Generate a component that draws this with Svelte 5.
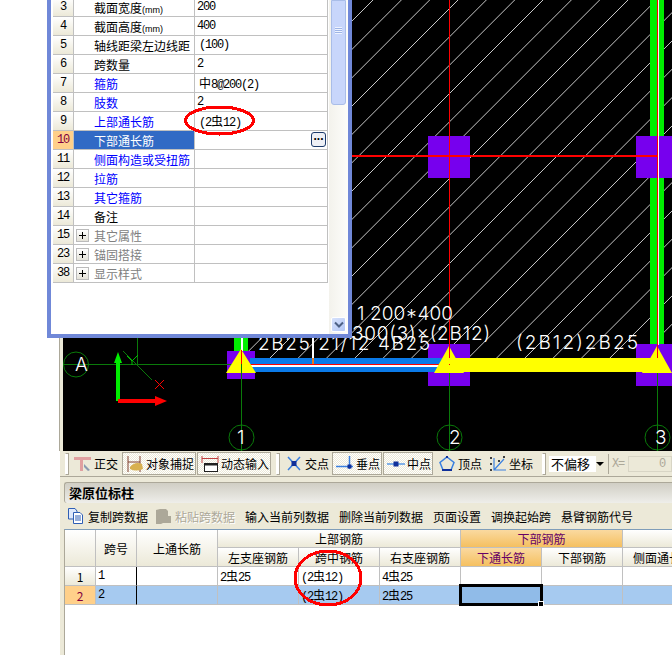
<script>
	const props = [
		{ n: 3, name: '截面宽度', unit: '(mm)', value: '200' },
		{ n: 4, name: '截面高度', unit: '(mm)', value: '400' },
		{ n: 5, name: '轴线距梁左边线距', value: '(100)', pad: true },
		{ n: 6, name: '跨数量', value: '2' },
		{ n: 7, name: '箍筋', kind: 'link', pad: true, before: '', sym: '中', value: '8@200(2)' },
		{ n: 8, name: '肢数', kind: 'link', value: '2' },
		{ n: 9, name: '上部通长筋', kind: 'link', pad: true, before: '(2', sym: '虫', value: '12)' },
		{ n: 10, name: '下部通长筋', kind: 'active', value: '' },
		{ n: 11, name: '侧面构造或受扭筋', kind: 'link', value: '' },
		{ n: 12, name: '拉筋', kind: 'link', value: '' },
		{ n: 13, name: '其它箍筋', kind: 'link', value: '' },
		{ n: 14, name: '备注', value: '' },
		{ n: 15, name: '其它属性', kind: 'group', value: '' },
		{ n: 23, name: '锚固搭接', kind: 'group', value: '' },
		{ n: 38, name: '显示样式', kind: 'group', value: '' }
	];

	const actions = ['输入当前列数据', '删除当前列数据', '页面设置', '调换起始跨', '悬臂钢筋代号'];

	// 45 degree slab hatch, x + y = c
	const hatch = Array.from({ length: 30 }, (_, i) => 259.7 + i * 28.33);
</script>

<div class="page">
	<div class="work">
		<svg class="canvas" width="609" height="451" viewBox="63 0 609 451">
			<defs>
				<clipPath id="slab"><rect x="248" y="0" width="424" height="358" /></clipPath>
			</defs>
			<g clip-path="url(#slab)" class="hatch">
				{#each hatch as c}
					<line x1={c} y1="0" x2={c - 358} y2="358" />
				{/each}
			</g>

			<!-- columns and walls -->
			<rect x="234" y="300" width="14" height="52" fill="#00ee00" />
			<rect x="241" y="300" width="2" height="52" fill="#ffffff" />
			<rect x="650" y="0" width="14" height="345" fill="#00ee00" />
			<rect x="428" y="136" width="42" height="42" fill="#7700ee" />
			<rect x="636" y="136" width="36" height="42" fill="#7700ee" />
			<rect x="227" y="351" width="28" height="28" fill="#7700ee" />
			<rect x="428" y="344" width="42" height="42" fill="#7700ee" />
			<rect x="636" y="344" width="36" height="42" fill="#7700ee" />

			<!-- red reference lines -->
			<rect x="352" y="155" width="305" height="2" fill="#ff0000" />
			<rect x="449" y="0" width="1" height="358" fill="#ff0000" />
			<rect x="657" y="0" width="1" height="358" fill="#ff0000" />
			<rect x="658" y="0" width="1" height="345" fill="#ffffff" />

			<!-- beams -->
			<rect x="250" y="358" width="200" height="14" fill="#0a7ae8" />
			<rect x="250" y="365" width="200" height="2" fill="#ffffff" />
			<rect x="450" y="358" width="206" height="14" fill="#ffff00" />
			<rect x="241" y="364" width="209" height="1" fill="#ff0000" />
			<rect x="312" y="337" width="2" height="21" fill="#ffffff" />
			<rect x="312" y="358" width="2" height="6" fill="#e87820" />

			<!-- axis grid -->
			<g stroke="#0a7a0a" fill="none">
				<line x1="63" y1="364.5" x2="241" y2="364.5" />
				<line x1="241.5" y1="373" x2="241.5" y2="451" />
				<line x1="449.5" y1="372" x2="449.5" y2="451" />
				<line x1="657.5" y1="372" x2="657.5" y2="451" />
				<line x1="137.5" y1="337" x2="137.5" y2="364" />
				<line x1="123" y1="351" x2="152" y2="380" />
				<circle cx="76" cy="364.5" r="12.5" />
				<circle cx="241.5" cy="437.5" r="12.5" />
				<circle cx="449.5" cy="437.5" r="12.5" />
				<circle cx="657.5" cy="437.5" r="12.5" />
				<path d="M127 356 L132 361 L138 355 M132 361 V365" stroke="#00c000" />
			</g>

			<!-- supports -->
			<path d="M241 349 L256 373 H226 Z" fill="#ffff00" />
			<path d="M449 346 L464 373 H434 Z" fill="#ffff00" />
			<path d="M657 346 L672 373 H642 Z" fill="#ffff00" />
			<rect x="241" y="350" width="1" height="24" fill="#ff0000" />
			<rect x="241" y="364" width="1" height="10" fill="#0a7a0a" />
			<rect x="449" y="346" width="1" height="12" fill="#ff0000" />
			<rect x="657" y="346" width="1" height="12" fill="#ff0000" />
			<rect x="449" y="364" width="1" height="1" fill="#ff0000" />

			<!-- ucs arrows -->
			<rect x="116" y="360" width="4" height="41" fill="#00ee00" />
			<path d="M118 352 L122 363 H114 Z" fill="#00ee00" />
			<rect x="118" y="399" width="40" height="4" fill="#ff0000" />
			<path d="M167 401 L155 396 V406 Z" fill="#ff0000" />
			<path d="M155 380 L164 389 M164 380 L155 389" stroke="#ff0000" fill="none" />

			<!-- plan annotations -->
			<text class="cad" x="357" y="320" textLength="96">1 200*400</text>
			<text class="cad" x="352" y="340" textLength="138">300(3)×(2B12)</text>
			<text class="cad" x="258" y="350" textLength="172">2B25 21/12 4B25</text>
			<text class="cad" x="516" y="349" textLength="122">(2B12)2B25</text>
			<text class="cad" x="75" y="371">A</text>
			<text class="cad" x="237" y="444">1</text>
			<text class="cad" x="449" y="444">2</text>
			<text class="cad" x="655" y="444">3</text>
		</svg>
	</div>

	<div class="bottom">
		<div class="toolbar">
			<span class="grip first"></span>
			<div class="tool">
				<svg width="18" height="18" viewBox="0 0 18 18">
					<path d="M0 2 H17 V5 H9 V16 H6 V5 H0 Z" fill="#e0a0a0" />
					<path d="M10 9 L16 15 L14 16 L10 12 Z" fill="#8a9ab0" />
				</svg>
				<span>正交</span>
			</div>
			<div class="tool on wide">
				<svg width="18" height="18" viewBox="0 0 18 18">
					<path d="M2 1 V17 M14 1 V17 M2 7 H14" stroke="#804030" fill="none" />
					<path d="M4 12 Q9 6 16 9 L17 14 Q10 17 4 14 Z" fill="#d8b050" />
				</svg>
				<span>对象捕捉</span>
			</div>
			<div class="tool on wide">
				<svg width="18" height="18" viewBox="0 0 18 18">
					<path d="M1 1 V8 M17 1 V8 M1 3.500 H17" stroke="#c04040" fill="none" />
					<rect x="3.500" y="8.500" width="13" height="8" fill="#fff" stroke="#202020" />
					<rect x="4" y="9" width="12" height="1.500" fill="#202020" />
				</svg>
				<span>动态输入</span>
			</div>
			<span class="grip"></span>
			<div class="tool">
				<svg width="18" height="18" viewBox="0 0 18 18">
					<path d="M3 2 L15 15 M15 2 L3 15" stroke="#3a80e0" stroke-width="1.500" fill="none" />
					<rect x="6.500" y="6" width="5" height="5" fill="#10309a" />
				</svg>
				<span>交点</span>
			</div>
			<div class="tool on">
				<svg width="18" height="18" viewBox="0 0 18 18">
					<path d="M0 11.500 H17 M13.500 1 V14" stroke="#3a80e0" stroke-width="1.500" fill="none" />
					<rect x="11.500" y="9.500" width="4" height="4" fill="#10309a" />
				</svg>
				<span>垂点</span>
			</div>
			<div class="tool on">
				<svg width="18" height="18" viewBox="0 0 18 18">
					<path d="M0 9 H18" stroke="#80b0e8" stroke-width="2" fill="none" />
					<rect x="6.500" y="6.500" width="5" height="5" fill="#10309a" />
				</svg>
				<span>中点</span>
			</div>
			<div class="tool">
				<svg width="18" height="18" viewBox="0 0 18 18">
					<path d="M9 2 L16 7.500 L13 15 H5 L2 7.500 Z" stroke="#3a80e0" stroke-width="1.500" fill="none" />
					<path d="M4 14 H14 V16 H4 Z M8 1 H10 V3 H8 Z" fill="#10309a" />
				</svg>
				<span>顶点</span>
			</div>
			<div class="tool">
				<svg width="18" height="18" viewBox="0 0 18 18">
					<path d="M5 3 V15 H17 M5 15 L15 4" stroke="#3a80e0" stroke-width="1.200" fill="none" />
					<path d="M1 2 h2 v2 h-2 Z M1 8 h2 v2 h-2 Z M1 14 h2 v2 h-2 Z M14 1 h2 v2 h-2 Z M9 5 h2 v2 h-2 Z" fill="#404040" />
				</svg>
				<span>坐标</span>
			</div>
			<span class="grip narrow"></span>
			<div class="combo">
				<span class="combo-text">不偏移</span>
				<span class="combo-arrow"></span>
			</div>
			<span class="sep"></span>
			<span class="mono coord-label">X=</span>
			<div class="coord mono">0</div>
		</div>

		<div class="title"><b>梁原位标柱</b></div>

		<div class="actions">
			<div class="action">
				<svg width="15" height="16" viewBox="0 0 15 16">
					<path d="M0.500 0.500 H7 L9 3 V11 H0.500 Z" fill="#dfe9fb" stroke="#2f5fb5" />
					<path d="M5.500 4.500 H12 L14.500 7 V15.500 H5.500 Z" fill="#ffffff" stroke="#2f5fb5" />
					<path d="M7 8 H13 M7 10 H13 M7 12 H13" stroke="#2f5fb5" />
				</svg>
				<span>复制跨数据</span>
			</div>
			<div class="action disabled">
				<svg width="17" height="16" viewBox="0 0 17 16">
					<path d="M1 2 L5 1 H11 L13 3 V8 H16 V15 H8 L6 16 H1 Z" fill="#aca899" />
				</svg>
				<span>粘贴跨数据</span>
			</div>
			{#each actions as label}
				<div class="action"><span>{label}</span></div>
			{/each}
		</div>

		<div class="sheet">
			<table class="beam">
				<colgroup>
					<col class="c-idx" /><col class="c-no" /><col class="c-w" /><col class="c-w" /><col class="c-w" /><col class="c-w" /><col class="c-w" /><col class="c-w" /><col class="c-w" />
				</colgroup>
				<thead>
					<tr>
						<th rowspan="2"></th>
						<th rowspan="2">跨号</th>
						<th rowspan="2">上通长筋</th>
						<th colspan="3">上部钢筋</th>
						<th colspan="2" class="hot">下部钢筋</th>
						<th></th>
					</tr>
					<tr>
						<th>左支座钢筋</th>
						<th>跨中钢筋</th>
						<th>右支座钢筋</th>
						<th class="hot">下通长筋</th>
						<th>下部钢筋</th>
						<th>侧面通长筋</th>
					</tr>
				</thead>
				<tbody>
					<tr>
						<td class="idx">1</td>
						<td class="mono strong">1</td>
						<td></td>
						<td class="mono">2<i>虫</i>25</td>
						<td class="mono">(2<i>虫</i>12)</td>
						<td class="mono">4<i>虫</i>25</td>
						<td></td>
						<td></td>
						<td></td>
					</tr>
					<tr class="current">
						<td class="idx">2</td>
						<td class="mono strong">2</td>
						<td></td>
						<td></td>
						<td class="mono">(2<i>虫</i>12)</td>
						<td class="mono">2<i>虫</i>25</td>
						<td class="picked"><span class="cursor"><span class="handle"></span></span></td>
						<td></td>
						<td></td>
					</tr>
				</tbody>
			</table>
		</div>
	</div>

	<!-- floating property window -->
	<div class="dialog">
		<div class="grid-area">
			<table class="props">
				<colgroup><col class="p-idx" /><col class="p-name" /><col /></colgroup>
				<tbody>
					{#each props as row}
						<tr class={row.kind ?? ''}>
							<td class="idx mono">{row.n}</td>
							<td class="name">
								{#if row.kind === 'group'}<span class="plus"></span>{/if}
								<span>{row.name}{#if row.unit}<small>{row.unit}</small>{/if}</span>
							</td>
							<td class="val mono" class:pad={row.pad}>
								{row.before ?? ''}{#if row.sym}<i>{row.sym}</i>{/if}{row.value}
								{#if row.kind === 'active'}<span class="more">...</span>{/if}
							</td>
						</tr>
					{/each}
				</tbody>
			</table>
		</div>
		<div class="scrollbar">
			<div class="thumb"><span class="thumb-grip"></span></div>
			<div class="down">
				<svg width="10" height="8" viewBox="0 0 10 8">
					<path d="M1 1.500 L5 5.500 L9 1.500" stroke="#4d6185" stroke-width="2" fill="none" />
				</svg>
			</div>
		</div>
	</div>

	<!-- hand drawn review marks -->
	<svg class="marks" width="672" height="655" viewBox="0 0 672 655">
		<ellipse cx="219.500" cy="120.500" rx="34" ry="13.500" />
		<ellipse cx="328" cy="578" rx="33" ry="27" />
	</svg>
</div>

<style>
	:global(body) {
		margin: 0;
		background: #fff;
	}

	.page {
		position: relative;
		width: 672px;
		height: 655px;
		overflow: hidden;
		display: flex;
		flex-direction: column;
		font-family: "Noto Sans CJK SC", "Liberation Sans", sans-serif;
		font-size: 12px;
		color: #000;
	}

	.mono {
		font-family: "Liberation Mono", "Noto Sans CJK SC", monospace;
		letter-spacing: -1.2px;
	}

	.mono i {
		font-style: normal;
		letter-spacing: 0;
		font-family: "Noto Sans CJK SC", sans-serif;
	}

	/* drawing area */
	.work {
		height: 451px;
		margin-left: 59px;
		border-left: 1px solid #aca899;
		padding-left: 3px;
		background: #ece9d8;
		flex: none;
	}

	.canvas {
		display: block;
		background: #000;
	}

	.hatch line {
		stroke: #c8c8c8;
		stroke-width: 1;
	}

	.cad {
		font-family: "Inter", "Liberation Mono", monospace;
		font-size: 19px;
		font-weight: 300;
		fill: #fff;
	}

	.bottom {
		flex: 1;
		margin-left: 60px;
		background: #ece9d8;
		display: flex;
		flex-direction: column;
		min-height: 0;
	}

	/* toolbars */
	.toolbar {
		height: 25px;
		flex: none;
		display: flex;
		align-items: center;
		border-bottom: 1px solid #aca899;
		white-space: nowrap;
	}

	.grip {
		width: 2px;
		height: 20px;
		margin: 0 1px 0 4px;
		background: #fff;
		border: 1px solid #aca899;
		border-left-color: #fff;
		flex: none;
	}

	.grip.first {
		margin-left: 5px;
	}

	.grip.narrow {
		margin: 0 3px 0 6px;
	}

	.tool {
		box-sizing: border-box;
		width: 50px;
		height: 23px;
		flex: none;
		display: flex;
		align-items: center;
		gap: 2px;
		padding-left: 4px;
		margin-right: 1px;
	}

	.tool.wide {
		width: 74px;
	}

	.tool svg {
		flex: none;
	}

	.tool.on {
		border: 1px solid #aca899;
		padding-left: 3px;
		background: repeating-conic-gradient(#ffffff 0 25%, #ece9d8 0 50%) 0 0 / 2px 2px;
	}

	.first + .tool {
		margin-right: 2px;
	}

	.combo {
		width: 56px;
		height: 16px;
		background: #fff;
		display: flex;
		align-items: center;
		justify-content: space-between;
		flex: none;
		font-size: 13px;
	}

	.combo-text {
		padding-left: 2px;
	}

	.combo-arrow {
		width: 9px;
		height: 16px;
		background: #ece9d8;
		position: relative;
	}

	.combo-arrow::after {
		content: "";
		position: absolute;
		left: 0;
		top: 6px;
		border: 4px solid transparent;
		border-top: 4px solid #000;
		border-bottom: 0;
	}

	.sep {
		width: 1px;
		height: 20px;
		margin-left: 3px;
		background: #aca899;
		flex: none;
	}

	.coord-label {
		margin-left: 3px;
		width: 16px;
		color: #aca899;
		flex: none;
	}

	.coord {
		box-sizing: border-box;
		width: 44px;
		height: 16px;
		line-height: 14px;
		flex: none;
		padding-right: 6px;
		text-align: right;
		color: #aca899;
		border: 1px solid #d8d5c5;
	}

	.title {
		margin: 5px 0 0 4px;
		height: 21px;
		line-height: 20px;
		flex: none;
		box-sizing: border-box;
		padding-left: 4px;
		font-size: 13px;
		background: linear-gradient(#d0cec4, #eeeeea);
		border-left: 1px solid #aca899;
		border-top: 1px solid #aca899;
		border-radius: 3px 0 0 3px;
	}

	.actions {
		height: 26px;
		flex: none;
		display: flex;
		align-items: center;
		gap: 10px;
		padding-left: 8px;
		white-space: nowrap;
	}

	.action {
		display: flex;
		align-items: center;
		gap: 5px;
	}

	.action.disabled {
		gap: 3px;
		margin-left: -3px;
		color: #aca899;
		text-shadow: 1px 1px 0 #fff;
	}

	/* span grid */
	.sheet {
		flex: 1;
		margin-left: 4px;
		border-top: 1px solid #7f9db9;
		border-left: 1px solid #aca899;
		background: #fff;
		overflow: hidden;
	}

	table {
		border-collapse: separate;
		border-spacing: 0;
		table-layout: fixed;
	}

	.beam {
		width: 638px;
	}

	.c-idx {
		width: 31px;
	}

	.c-no {
		width: 41px;
	}

	.c-w {
		width: 81px;
	}

	.beam th {
		height: 19px;
		padding: 0;
		box-sizing: border-box;
		font-weight: normal;
		background: linear-gradient(#ffffff, #ece9d8);
		border-right: 1px solid #c0c0c0;
		border-bottom: 1px solid #c0c0c0;
		white-space: nowrap;
		overflow: hidden;
	}

	.beam thead tr:first-child th {
		height: 18px;
	}

	.beam th.hot {
		color: #660066;
		background: linear-gradient(#fad9a0, #f5c060);
	}

	.beam td {
		height: 19px;
		padding: 0 0 0 2px;
		box-sizing: border-box;
		border-right: 1px solid #c0c0c0;
		border-bottom: 1px solid #c0c0c0;
		white-space: nowrap;
	}

	.beam td.idx {
		padding: 0;
		text-align: center;
		background: linear-gradient(#ffffff, #ece9d8);
	}

	.beam td.strong {
		border-right: 1px solid #000;
	}

	.current td {
		background: #a6caf0;
	}

	.current td.idx {
		background: #ffd08a;
		color: #800040;
	}

	.picked {
		position: relative;
		background: #90bbe8 !important;
	}

	.cursor {
		position: absolute;
		left: -2px;
		top: -2px;
		right: -2px;
		bottom: -2px;
		border: 3px solid #000;
	}

	.handle {
		position: absolute;
		right: -4px;
		bottom: -4px;
		width: 4px;
		height: 4px;
		background: #000;
		border: 1px solid #fff;
	}

	/* property window */
	.dialog {
		position: absolute;
		left: 47px;
		top: 0;
		width: 305px;
		height: 338px;
		box-sizing: border-box;
		border: 4px solid #7088d8;
		border-top: 0;
		background: #fff;
		display: flex;
	}

	.grid-area {
		width: 278px;
		padding-left: 2px;
		box-sizing: border-box;
		overflow: hidden;
	}

	.props {
		width: 275px;
		margin-top: -2px;
	}

	.p-idx {
		width: 21px;
	}

	.p-name {
		width: 121px;
	}

	.props td {
		height: 19px;
		padding: 0;
		box-sizing: border-box;
		border-right: 1px solid #c0c0c0;
		border-bottom: 1px solid #c0c0c0;
		white-space: nowrap;
		overflow: hidden;
	}

	.props td.idx {
		text-align: center;
		background: linear-gradient(#ffffff, #ece9d8);
	}

	.props td.name {
		padding-left: 20px;
	}

	.name small {
		font-size: 9px;
		font-family: "Liberation Sans", sans-serif;
	}

	.props td.val {
		padding-left: 2px;
		position: relative;
	}

	.props td.val.pad {
		padding-left: 4px;
	}

	.link .name {
		color: #0000ff;
	}

	.group .name {
		color: #808080;
	}

	.props .group td.name {
		padding-left: 2px;
	}

	.group .name {
		display: flex;
		align-items: center;
	}

	.plus {
		position: relative;
		box-sizing: border-box;
		width: 13px;
		height: 13px;
		margin-right: 5px;
		flex: none;
		border: 1px solid #bbb;
		background: linear-gradient(#fff, #e4e2d8);
	}

	.plus::before {
		content: "";
		position: absolute;
		left: 2px;
		top: 5px;
		width: 7px;
		height: 1px;
		background: #000;
	}

	.plus::after {
		content: "";
		position: absolute;
		left: 5px;
		top: 2px;
		width: 1px;
		height: 7px;
		background: #000;
	}

	.props .active td.idx {
		background: #ffd08a;
		color: #800040;
	}

	.props .active td.name {
		background: #316ac5;
		color: #fff;
	}

	.more {
		position: absolute;
		right: 1px;
		top: 1px;
		box-sizing: border-box;
		width: 15px;
		height: 15px;
		font-family: "Liberation Sans", sans-serif;
		font-size: 12px;
		line-height: 7px;
		letter-spacing: 0;
		text-align: center;
		font-weight: bold;
		color: #000;
		border: 1px solid #1c3a6b;
		border-radius: 3px;
		background: #eef0f6;
	}

	.scrollbar {
		position: relative;
		flex: 1;
		background: linear-gradient(90deg, #f3f2ec, #fdfdfa);
	}

	.thumb {
		position: absolute;
		left: 2px;
		top: 0;
		width: 15px;
		height: 105px;
		box-sizing: border-box;
		border: 1px solid #a9bde8;
		border-radius: 0 0 3px 3px;
		background: #c8d6fb;
	}

	.thumb-grip {
		position: absolute;
		left: 3px;
		top: 26px;
		width: 7px;
		height: 7px;
		background: repeating-linear-gradient(#eef3ff 0 1px, #9db4e6 1px 2px);
	}

	.down {
		position: absolute;
		left: 2px;
		bottom: 2px;
		width: 15px;
		height: 15px;
		box-sizing: border-box;
		border: 1px solid #fff;
		border-radius: 2px;
		background: linear-gradient(135deg, #d6e1fb, #b4c8f6);
		display: flex;
		align-items: center;
		justify-content: center;
	}

	.marks {
		position: absolute;
		left: 0;
		top: 0;
		pointer-events: none;
	}

	.marks ellipse {
		fill: none;
		stroke: #ff0000;
		stroke-width: 3;
		shape-rendering: crispEdges;
	}
</style>
